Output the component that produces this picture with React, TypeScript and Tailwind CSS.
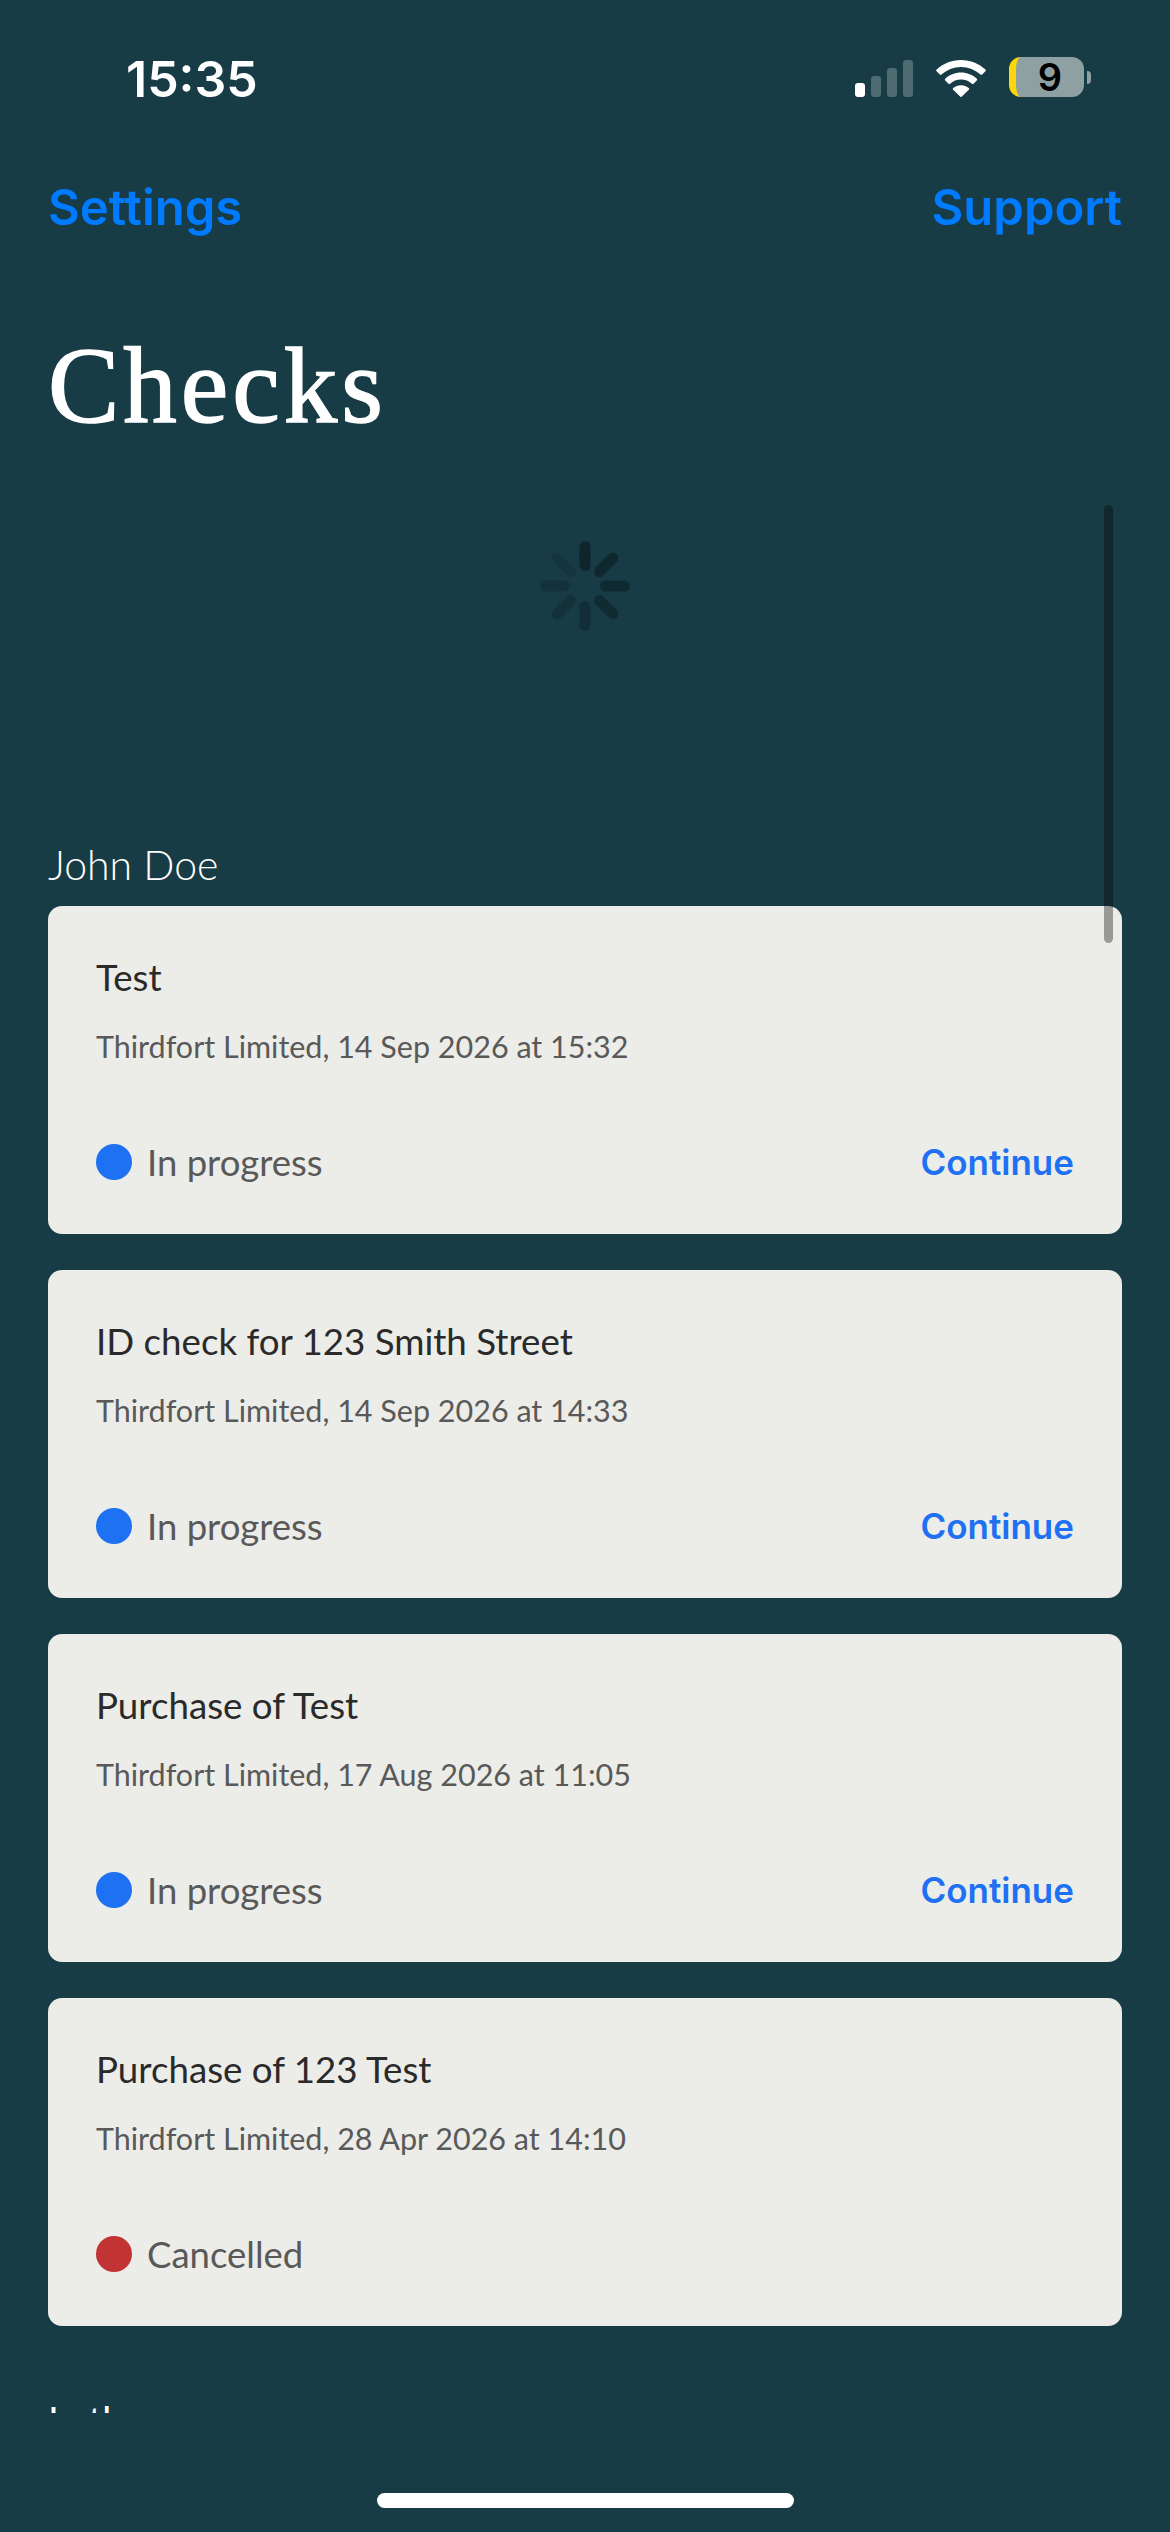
const sans = "font-['Lato','Noto_Sans',sans-serif]";

type Check = {
    title: string;
    meta: string;
    status: string;
    dot: string;
    action?: string;
};

const checks: Check[] = [
    { title: "Test", meta: "Thirdfort Limited, 14 Sep 2026 at 15:32", status: "In progress", dot: "bg-[#1d71f2]", action: "Continue" },
    { title: "ID check for 123 Smith Street", meta: "Thirdfort Limited, 14 Sep 2026 at 14:33", status: "In progress", dot: "bg-[#1d71f2]", action: "Continue" },
    { title: "Purchase of Test", meta: "Thirdfort Limited, 17 Aug 2026 at 11:05", status: "In progress", dot: "bg-[#1d71f2]", action: "Continue" },
    { title: "Purchase of 123 Test", meta: "Thirdfort Limited, 28 Apr 2026 at 14:10", status: "Cancelled", dot: "bg-[#c23434]" },
];

const StatusIcons = () => (
    <div className="flex items-end gap-[23px]">
        <div className="flex items-end gap-[6px]">
            <div className="h-[14px] w-[10px] rounded-[3px] bg-white" />
            <div className="h-[21px] w-[10px] rounded-[3px] bg-[#4d6b71]" />
            <div className="h-[29px] w-[10px] rounded-[3px] bg-[#4d6b71]" />
            <div className="h-[37px] w-[10px] rounded-[3px] bg-[#4d6b71]" />
        </div>
        <svg width="50" height="37" viewBox="0 0 50 37" fill="white">
            <path d="M25 0C15.5 0 7 3.6 0.6 9.6a1.2 1.2 0 0 0 0 1.7l3.2 3.3a1.2 1.2 0 0 0 1.7 0C10.7 9.8 17.5 6.9 25 6.9s14.3 2.9 19.5 7.7a1.2 1.2 0 0 0 1.7 0l3.2-3.3a1.2 1.2 0 0 0 0-1.7C43 3.6 34.5 0 25 0z" />
            <path d="M25 12.6c-6.1 0-11.6 2.3-15.8 6.1a1.2 1.2 0 0 0 0 1.7l3.3 3.3a1.2 1.2 0 0 0 1.6 0c2.9-2.5 6.7-4.1 10.9-4.1s8 1.6 10.9 4.1a1.2 1.2 0 0 0 1.6 0l3.3-3.3a1.2 1.2 0 0 0 0-1.7C36.6 14.9 31.1 12.6 25 12.6z" />
            <path d="M25 25.2c-3 0-5.7 1.1-7.8 2.9a1.2 1.2 0 0 0 0 1.7l6.9 6.8a1.3 1.3 0 0 0 1.8 0l6.9-6.8a1.2 1.2 0 0 0 0-1.7c-2.1-1.8-4.8-2.9-7.8-2.9z" />
        </svg>
        <div className="flex items-center gap-[3px]">
            <div className="flex h-[40px] w-[75px] items-center justify-center rounded-[12px] border-l-[7px] border-[#ffd60a] bg-[#8fa0a3] font-['Inter',sans-serif] text-[38px] font-semibold leading-[40px] text-black">
                9
            </div>
            <div className="h-[13px] w-[4px] rounded-r-full bg-[#8fa0a3]" />
        </div>
    </div>
);

const Spinner = () => {
    const bars = [
        { angle: 0, opacity: 0.38 },
        { angle: 45, opacity: 0.32 },
        { angle: 90, opacity: 0.3 },
        { angle: 135, opacity: 0.27 },
        { angle: 180, opacity: 0.2 },
        { angle: 225, opacity: 0.17 },
        { angle: 270, opacity: 0.15 },
        { angle: 315, opacity: 0.1 },
    ];
    return (
        <svg width="92" height="92" viewBox="-46 -46 92 92">
            {bars.map((bar) => (
                <line
                    key={bar.angle}
                    x1="0"
                    y1="-20.5"
                    x2="0"
                    y2="-39.5"
                    stroke="black"
                    strokeWidth="11"
                    strokeLinecap="round"
                    opacity={bar.opacity}
                    transform={`rotate(${bar.angle})`}
                />
            ))}
        </svg>
    );
};

const CheckCard = ({ check }: { check: Check }) => (
    <div className="flex h-[328px] flex-col rounded-[14px] bg-[#ecece8] px-[48px]">
        <div className="mt-[49px] text-[36.7px] leading-[44px] text-[#2a2a2a]">{check.title}</div>
        <div className="mt-[28px] text-[30.5px] leading-[38px] text-[#595959]">{check.meta}</div>
        <div className="mt-[75px] flex items-center justify-between">
            <div className="flex items-center gap-[15px]">
                <div className={`h-[36px] w-[36px] rounded-full ${check.dot}`} />
                <span className="text-[36.5px] leading-[44px] text-[#595959]">{check.status}</span>
            </div>
            {check.action ? (
                <span className="font-['Inter',sans-serif] text-[35px] font-semibold leading-[44px] text-[#1d71f2]">{check.action}</span>
            ) : null}
        </div>
    </div>
);

export default function App() {
    return (
        <div className={`relative h-[2532px] w-[1170px] overflow-hidden bg-[#173c46] ${sans}`}>
            <div className="flex h-[150px] items-end justify-between pb-[53px] pl-[126px] pr-[79px]">
                <span className="mb-[-8px] font-['Inter',sans-serif] text-[50px] font-semibold leading-[52px] text-white">15:35</span>
                <StatusIcons />
            </div>
            <div className="flex justify-between px-[48px] pt-[30px] font-['Inter',sans-serif] text-[49px] font-semibold leading-[56px] text-[#007aff]">
                <span>Settings</span>
                <span>Support</span>
            </div>
            <h1 className="mt-[95px] px-[48px] font-['Liberation_Serif',serif] text-[107px] font-normal leading-[110px] tracking-[4px] text-white [-webkit-text-stroke:1.5px_white]">
                Checks
            </h1>
            <div className="h-[1972px] overflow-hidden">
                <div className="flex justify-center pt-[99px]">
                    <Spinner />
                </div>
                <div className="px-[48px]">
                    <div className="mt-[209px] text-[41px] font-light leading-[48px] text-white">John Doe</div>
                    <div className="mt-[17px] flex flex-col gap-[36px]">
                        {checks.map((check) => (
                            <CheckCard key={check.title} check={check} />
                        ))}
                    </div>
                    <div className="mt-[70px] text-[39px] leading-[48px] text-white">Loth</div>
                </div>
            </div>
            <div className="absolute left-[1104px] top-[505px] h-[438px] w-[9px] rounded-full bg-black/35" />
            <div className="absolute left-[377px] top-[2493px] h-[15px] w-[417px] rounded-full bg-white" />
        </div>
    );
}
